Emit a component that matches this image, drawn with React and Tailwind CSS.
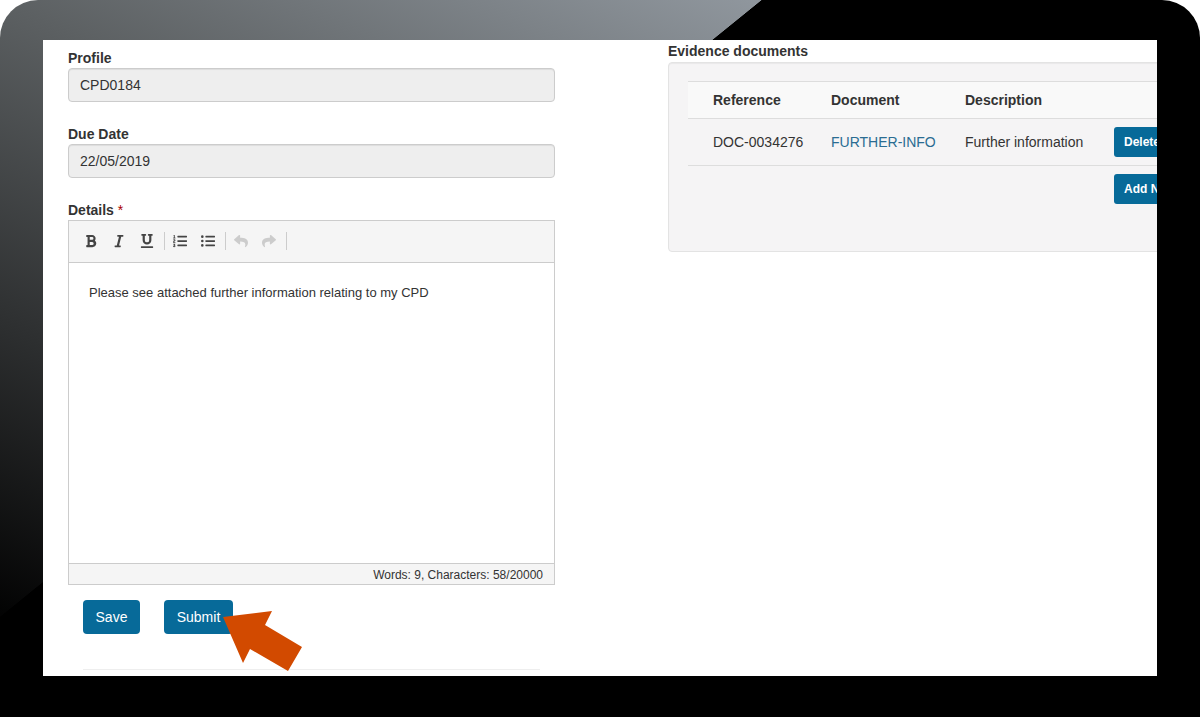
import React from "react";
import { FaBold, FaItalic, FaUnderline, FaListOl, FaListUl, FaReply, FaShare } from "react-icons/fa";

function Field({ label, value, className }) {
  return (
    <div className={className}>
      <div className="text-[14px] leading-[20px] font-bold text-[#333]">{label}</div>
      <div className="h-[34px] rounded-[4px] border border-[#ccc] bg-[#eee] pl-[11px] text-[14px] leading-[32px] text-[#333] shadow-[inset_0_1px_1px_rgba(0,0,0,0.075)]">
        {value}
      </div>
    </div>
  );
}

function Sep() {
  return <span className="ml-[3px] mr-px h-[18px] w-px bg-[#ccc]" />;
}

function Tool({ children, muted }) {
  return <span className={`flex w-[28px] justify-center text-[14px] ${muted ? "text-[#ccc]" : "text-[#444]"}`}>{children}</span>;
}

export default function App() {
  return (
    <div className="relative h-[717px] w-[1200px] overflow-hidden bg-white font-['Liberation_Sans',Arial,sans-serif]">
      <div className="h-full rounded-t-[38px] bg-[linear-gradient(141deg,transparent_36.5%,#000_36.55%),linear-gradient(25deg,#000_6.5%,#5c6062_56%,#90979e_84%)]" />
      <div className="absolute inset-0 flex px-[43px] pt-[40px] pb-[41px]">
        <div className="flex h-full w-full overflow-hidden bg-white">
          <div className="ml-[25px] w-[487px] shrink-0 pt-[8px]">
            <Field label="Profile" value="CPD0184" />
            <Field label="Due Date" value="22/05/2019" className="mt-[22px]" />
            <div className="mt-[22px] text-[14px] leading-[20px] font-bold text-[#333]">
              Details <span className="font-normal text-[#a00]">*</span>
            </div>
            <div className="flex h-[365px] flex-col border border-[#ccc]">
              <div className="flex h-[42px] items-center border-b border-[#ccc] bg-[#f5f5f5] pb-px pl-[8px]">
                <Tool><FaBold /></Tool>
                <Tool><FaItalic /></Tool>
                <Tool><FaUnderline /></Tool>
                <Sep />
                <Tool><FaListOl /></Tool>
                <Tool><FaListUl /></Tool>
                <Sep />
                <Tool muted><FaReply /></Tool>
                <Tool muted><FaShare /></Tool>
                <Sep />
              </div>
              <div className="flex-1 px-[20px] pt-[21px] text-[13px] leading-[18px] text-[#333]">
                Please see attached further information relating to my CPD
              </div>
              <div className="h-[21px] border-t border-[#ccc] bg-[#f5f5f5] pt-px pr-[11px] text-right text-[12px] leading-[21px] text-[#333]">
                Words: 9, Characters: 58/20000
              </div>
            </div>
            <div className="ml-[15px] mt-[15px] flex gap-[24px]">
              <button className="h-[34px] w-[57px] rounded-[4px] bg-[#076a99] text-[14px] text-white">Save</button>
              <button className="h-[34px] w-[69px] rounded-[4px] bg-[#076a99] text-[14px] text-white">Submit</button>
            </div>
            <div className="ml-[15px] mr-[15px] mt-[35px] border-t border-[#eee]" />
          </div>
          <div className="ml-[113px] w-[560px] shrink-0 pt-[3px]">
            <div className="text-[14px] leading-[16px] font-bold text-[#333]">Evidence documents</div>
            <div className="mt-[3px] h-[190px] rounded-[4px] border border-[#e3e3e3] bg-[#f5f4f5] pt-[18px] pl-[19px] shadow-[inset_0_1px_1px_rgba(0,0,0,0.05)]">
              <div className="flex h-[38px] items-center border-t border-b border-[#ddd] bg-[#f9f9f9] text-[14px] font-bold text-[#333]">
                <span className="ml-[25px] w-[118px]">Reference</span>
                <span className="w-[134px]">Document</span>
                <span>Description</span>
              </div>
              <div className="flex h-[47px] items-center border-b border-[#ddd] text-[14px] text-[#333]">
                <span className="ml-[25px] w-[118px]">DOC-0034276</span>
                <span className="w-[134px] text-[#2a6c92]">FURTHER-INFO</span>
                <span className="w-[149px]">Further information</span>
                <button className="h-[30px] w-[60px] rounded-[3px] bg-[#076a99] pl-[10px] text-left text-[12px] font-bold text-white">Delete</button>
              </div>
              <div className="flex pt-[8px]">
                <button className="ml-[426px] h-[30px] w-[80px] rounded-[3px] bg-[#076a99] pl-[10px] text-left text-[12px] font-bold text-white">Add New</button>
              </div>
            </div>
          </div>
        </div>
      </div>
      <svg className="absolute left-[220px] top-[608px] h-[66px] w-[86px]" viewBox="220 608 86 66">
        <polygon fill="#d24a00" points="223,617 272,611 265,625 302,647 288,671 250,649 243,663" />
      </svg>
    </div>
  );
}
